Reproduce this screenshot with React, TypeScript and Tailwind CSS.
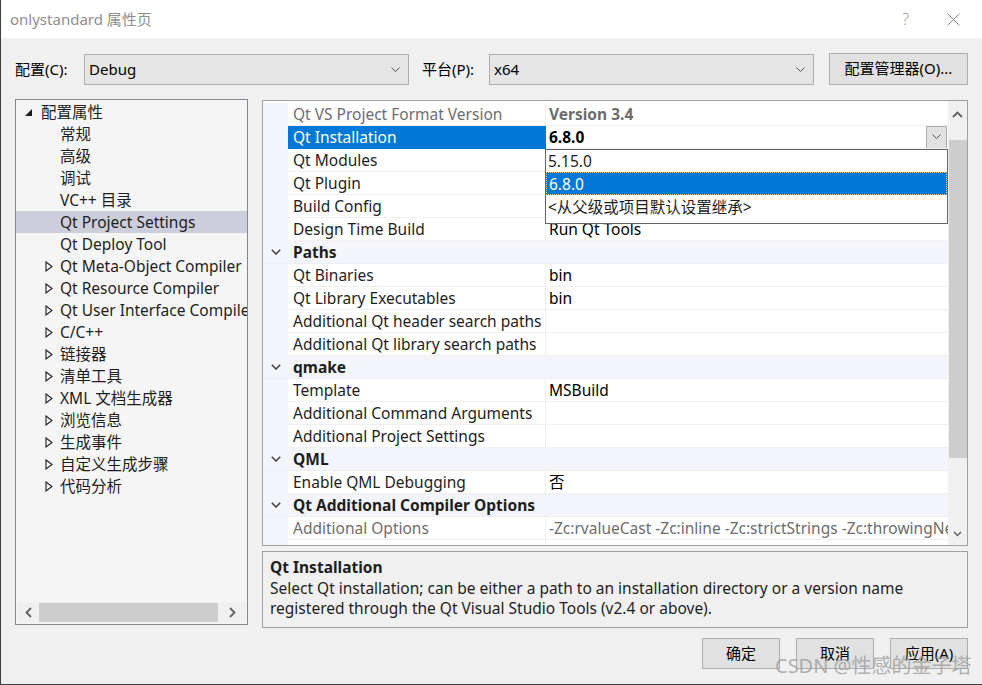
import React from "react";

const FONT = '"Noto Sans", "Noto Sans CJK SC", sans-serif';

function Chevron({ className = "" }: { className?: string }) {
  return (
    <svg width="9" height="6" viewBox="0 0 9 6" className={className}>
      <polyline points="0.5,0.5 4.5,4.5 8.5,0.5" fill="none" stroke="#555" strokeWidth="1" />
    </svg>
  );
}

function Combo({ value, width }: { value: string; width: string }) {
  return (
    <div className={`${width} h-[31px] bg-[#e5e5e5] border border-[#adadad] flex items-center justify-between pl-[4px] pr-[8px] text-[15px] text-black`}>
      <span>{value}</span>
      <Chevron />
    </div>
  );
}

const treeItems: { label: string; kind: "root" | "leaf" | "closed"; selected?: boolean }[] = [
  { label: "配置属性", kind: "root" },
  { label: "常规", kind: "leaf" },
  { label: "高级", kind: "leaf" },
  { label: "调试", kind: "leaf" },
  { label: "VC++ 目录", kind: "leaf" },
  { label: "Qt Project Settings", kind: "leaf", selected: true },
  { label: "Qt Deploy Tool", kind: "leaf" },
  { label: "Qt Meta-Object Compiler", kind: "closed" },
  { label: "Qt Resource Compiler", kind: "closed" },
  { label: "Qt User Interface Compiler", kind: "closed" },
  { label: "C/C++", kind: "closed" },
  { label: "链接器", kind: "closed" },
  { label: "清单工具", kind: "closed" },
  { label: "XML 文档生成器", kind: "closed" },
  { label: "浏览信息", kind: "closed" },
  { label: "生成事件", kind: "closed" },
  { label: "自定义生成步骤", kind: "closed" },
  { label: "代码分析", kind: "closed" },
];

type Row =
  | { cat: string }
  | { name: string; value?: string; gray?: boolean; bold?: boolean; sel?: boolean; drop?: boolean };

const rows: Row[] = [
  { name: "Qt VS Project Format Version", value: "Version 3.4", gray: true, bold: true },
  { name: "Qt Installation", value: "6.8.0", bold: true, sel: true, drop: true },
  { name: "Qt Modules" },
  { name: "Qt Plugin" },
  { name: "Build Config" },
  { name: "Design Time Build", value: "Run Qt Tools" },
  { cat: "Paths" },
  { name: "Qt Binaries", value: "bin" },
  { name: "Qt Library Executables", value: "bin" },
  { name: "Additional Qt header search paths" },
  { name: "Additional Qt library search paths" },
  { cat: "qmake" },
  { name: "Template", value: "MSBuild" },
  { name: "Additional Command Arguments" },
  { name: "Additional Project Settings" },
  { cat: "QML" },
  { name: "Enable QML Debugging", value: "否" },
  { cat: "Qt Additional Compiler Options" },
  { name: "Additional Options", value: "-Zc:rvalueCast -Zc:inline -Zc:strictStrings -Zc:throwingNew -permissive-", gray: true },
  { name: "Excluded Options" },
];

function GridRow({ r }: { r: Row }) {
  if ("cat" in r) {
    return (
      <div className="h-[23px] flex items-center bg-[#f3f5fa] border-b border-[#eceef3]">
        <div className="w-[25px] flex justify-center pl-[1px]">
          <svg width="10" height="6" viewBox="0 0 10 6">
            <polyline points="0.8,0.8 5,5 9.2,0.8" fill="none" stroke="#444" strokeWidth="1.6" />
          </svg>
        </div>
        <span className="pl-[5px] pt-[2px] font-bold text-[15.5px] text-[#1e1e1e] whitespace-nowrap">{r.cat}</span>
      </div>
    );
  }
  return (
    <div className="h-[23px] flex">
      <div className="w-[25px] shrink-0 bg-[#f3f5fa]" />
      <div
        className={`w-[258px] shrink-0 flex items-center pl-[5px] pt-[2px] text-[15.5px] whitespace-nowrap overflow-hidden border-b border-r ${
          r.sel ? "bg-[#0078d7] text-white border-[#0078d7]" : r.gray ? "text-[#6d6d6d] border-[#f0f0f0]" : "text-[#1e1e1e] border-[#f0f0f0]"
        }`}
      >
        {r.name}
      </div>
      <div className="w-[402px] shrink-0 flex items-center justify-between pl-[3px] border-b border-[#f0f0f0] text-[15.5px] whitespace-nowrap overflow-hidden">
        <span className={`pt-[2px] ${r.bold ? "font-bold" : ""} ${r.gray ? "text-[#6d6d6d]" : "text-black"}`}>{r.value ?? ""}</span>
        {r.drop && (
          <div className="w-[21px] h-[23px] bg-[#e1e1e1] border border-[#adadad] flex items-center justify-center mr-[1px] shrink-0">
            <Chevron />
          </div>
        )}
      </div>
    </div>
  );
}

export default function App() {
  return (
    <div
      className="w-[982px] h-[685px] bg-[#f0f0f0] border-l border-b border-[#3f3f3f] flex flex-col relative overflow-hidden"
      style={{ fontFamily: FONT }}
    >
      {/* Title bar */}
      <div className="h-[38px] bg-white flex items-center pl-[9px] pr-[22px] shrink-0">
        <span className="text-[15px] text-[#8f8f8f]">onlystandard 属性页</span>
        <span className="ml-auto text-[16px] text-[#9a9a9a] mr-[38px] font-light">?</span>
        <svg width="13" height="13" viewBox="0 0 13 13">
          <line x1="0.5" y1="0.5" x2="12.5" y2="12.5" stroke="#8a8a8a" strokeWidth="1" />
          <line x1="12.5" y1="0.5" x2="0.5" y2="12.5" stroke="#8a8a8a" strokeWidth="1" />
        </svg>
      </div>

      {/* Config row */}
      <div className="flex items-center pl-[14px] pr-[14px] mt-[16px] h-[31px] shrink-0 text-[15px] text-black">
        <span className="w-[69px]">配置(C):</span>
        <Combo value="Debug" width="w-[325px]" />
        <span className="ml-[13px] w-[67px]">平台(P):</span>
        <Combo value="x64" width="w-[325px]" />
        <div className="ml-[15px] w-[139px] h-[32px] -mt-[2px] bg-[#e1e1e1] border border-[#adadad] flex items-center justify-center">
          配置管理器(O)...
        </div>
      </div>

      {/* Main */}
      <div className="flex pl-[14px] mt-[14px] gap-[14px]">
        {/* Tree */}
        <div className="w-[233px] h-[526px] border border-[#828790] bg-[#f5f5f5] flex flex-col shrink-0">
          <div className="flex-1 pt-[1px] overflow-hidden">
            {treeItems.map((t) => (
              <div
                key={t.label}
                className={`h-[22px] flex items-center whitespace-nowrap text-[15.5px] text-[#1e1e1e] ${t.selected ? "bg-[#cccedb]" : ""}`}
              >
                {t.kind === "root" && (
                  <>
                    <svg width="9" height="9" viewBox="0 0 9 9" className="ml-[8px] mr-[8px] shrink-0">
                      <polygon points="8,1 8,8 1,8" fill="#1e1e1e" />
                    </svg>
                    <span className="pt-[2px]">{t.label}</span>
                  </>
                )}
                {t.kind === "leaf" && <span className="pl-[44px] pt-[2px]">{t.label}</span>}
                {t.kind === "closed" && (
                  <>
                    <svg width="8" height="11" viewBox="0 0 8 11" className="ml-[29px] mr-[7px] shrink-0">
                      <polygon points="1,1 7,5.5 1,10" fill="none" stroke="#1e1e1e" strokeWidth="1.1" />
                    </svg>
                    <span className="pt-[2px]">{t.label}</span>
                  </>
                )}
              </div>
            ))}
          </div>
          <div className="h-[21px] mb-[1px] mx-[1px] bg-[#f0f0f0] flex items-center">
            <div className="w-[22px] flex justify-center">
              <svg width="7" height="11" viewBox="0 0 7 11">
                <polyline points="6,1 1.5,5.5 6,10" fill="none" stroke="#606060" strokeWidth="1.8" />
              </svg>
            </div>
            <div className="w-[179px] h-[19px] bg-[#cdcdcd]" />
            <div className="flex-1 flex justify-center">
              <svg width="7" height="11" viewBox="0 0 7 11">
                <polyline points="1,1 5.5,5.5 1,10" fill="none" stroke="#606060" strokeWidth="1.8" />
              </svg>
            </div>
          </div>
        </div>

        {/* Right column */}
        <div className="w-[706px] shrink-0 flex flex-col">
          <div className="h-[446px] border border-[#a0a0a0] bg-white flex relative mt-[1px] overflow-hidden">
            <div className="w-[685px] shrink-0 pt-[2px] overflow-hidden">
              {rows.map((r, i) => (
                <GridRow key={i} r={r} />
              ))}
            </div>
            <div className="w-[19px] bg-[#f0f0f0] flex flex-col items-center shrink-0">
              <div className="h-[24px] flex items-center justify-center pt-[2px]">
                <svg width="11" height="7" viewBox="0 0 11 7">
                  <polyline points="1,6 5.5,1.5 10,6" fill="none" stroke="#606060" strokeWidth="1.8" />
                </svg>
              </div>
              <div className="w-[18px] h-[318px] bg-[#cdcdcd] mt-[15px]" />
              <div className="mt-auto h-[22px] flex items-center justify-center">
                <svg width="9" height="6" viewBox="0 0 9 6">
                  <polyline points="1,1 4.5,4.5 8,1" fill="none" stroke="#606060" strokeWidth="1.5" />
                </svg>
              </div>
            </div>

            {/* Dropdown list */}
            <div className="absolute left-[282px] top-[48px] w-[403px] h-[75px] bg-white border border-[#646464] text-[15.5px] text-[#1e1e1e]">
              <div className="h-[22px] flex items-center pl-[2px] pt-[2px]">5.15.0</div>
              <div className="h-[23px] flex items-center pl-[2px] pt-[2px] bg-[#0078d7] text-white border border-dotted border-[#f6c77a]">6.8.0</div>
              <div className="h-[23px] flex items-center pl-[2px] pt-[2px]">&lt;从父级或项目默认设置继承&gt;</div>
            </div>
          </div>

          <div className="mt-[5px] h-[77px] border border-[#a0a0a0] bg-[#f0f0f0] px-[7px] pt-[4px] text-[15.5px] text-[#1e1e1e] leading-[20px] overflow-hidden">
            <div className="font-bold h-[22px] flex items-center">Qt Installation</div>
            <div className="whitespace-nowrap">Select Qt installation; can be either a path to an installation directory or a version name</div>
            <div className="whitespace-nowrap">registered through the Qt Visual Studio Tools (v2.4 or above).</div>
          </div>

          <div className="flex justify-end gap-[16px] mt-[10px] text-[15px] text-black">
            {["确定", "取消", "应用(A)"].map((b) => (
              <div key={b} className="w-[78px] h-[31px] bg-[#e1e1e1] border border-[#adadad] flex items-center justify-center">
                {b}
              </div>
            ))}
          </div>
        </div>
      </div>

      {/* Watermark */}
      <div className="absolute left-[774px] top-[651px] text-[20px] text-[#9c9c9c]/80 whitespace-nowrap">
        CSDN @性感的金子塔
      </div>
    </div>
  );
}
